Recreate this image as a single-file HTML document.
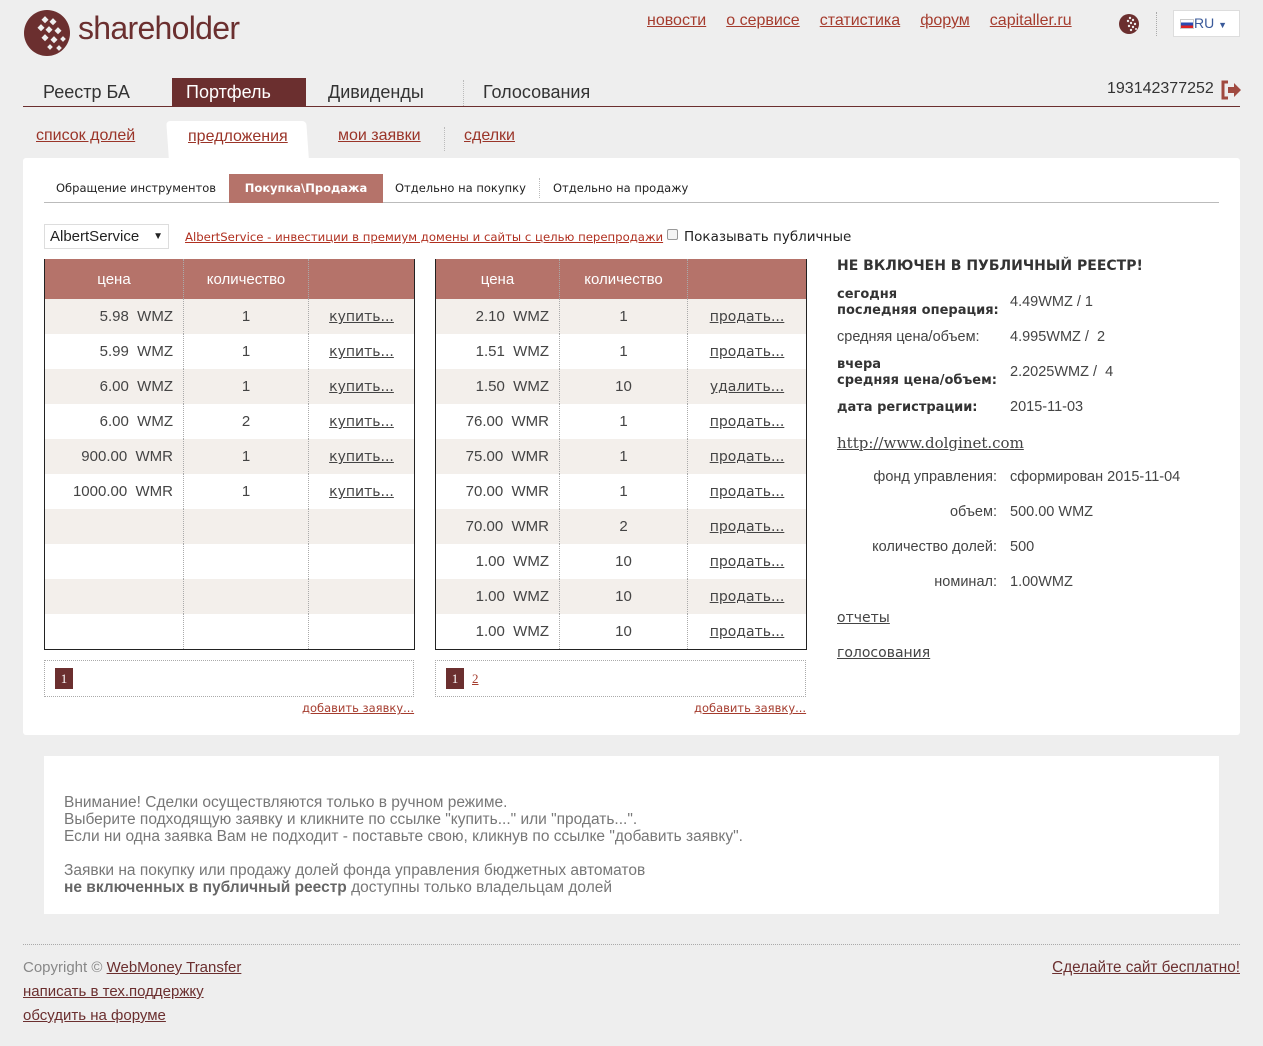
<!DOCTYPE html>
<html><head><meta charset="utf-8"><style>
*{margin:0;padding:0;box-sizing:border-box}
body{width:1263px;height:1046px;background:#eeeeee;font-family:"Liberation Sans",sans-serif;color:#333;position:relative;overflow:hidden}
a{color:#8b2d22;text-decoration:underline}
.abs{position:absolute}
.top a{font-size:16px;color:#a53c2e;margin-left:20px}
.tabs div{position:absolute;top:78px;height:28px;font-size:18px;line-height:28px;color:#333}
.sub a{position:absolute;font-size:16px;color:#9a3428}
table{border-collapse:collapse;position:absolute;font-size:15px;color:#444}
table td,table th{height:35px;border-right:1px dotted #aaa}
table th{height:40px;background:#b5736a;color:#fff;font-weight:normal;font-size:15px}
table td:last-child,table th:last-child{border-right:none}
tr.o td{background:#f3efeb}
td.p{text-align:right;padding-right:10px}
td.q{text-align:center}
td.l{text-align:center}
td.l a{color:#444;font-family:"DejaVu Sans",sans-serif;font-size:14px}
.info{position:absolute;left:837px;font-size:14.5px;color:#444}
</style></head><body>
<svg class="abs" style="left:23px;top:9px" width="50" height="50" viewBox="0 0 50 50">
<circle cx="24" cy="24" r="23" fill="#6b2f2f"/>
<g fill="#eee">
<rect x="20" y="8" width="5" height="5" transform="rotate(45 22 10)"/>
<rect x="28" y="10" width="5" height="5" transform="rotate(45 30 12)"/>
<rect x="16" y="16" width="5" height="5" transform="rotate(45 18 18)"/>
<rect x="24" y="18" width="5" height="5" transform="rotate(45 26 20)"/>
<rect x="33" y="19" width="5" height="5" transform="rotate(45 35 21)"/>
<rect x="20" y="26" width="5" height="5" transform="rotate(45 22 28)"/>
<rect x="29" y="28" width="5" height="5" transform="rotate(45 31 30)"/>
<rect x="38" y="28" width="4" height="4" transform="rotate(45 40 30)"/>
<rect x="25" y="36" width="4" height="4" transform="rotate(45 27 38)"/>
<rect x="34" y="37" width="4" height="4" transform="rotate(45 36 39)"/>
</g></svg>
<div class="abs" style="left:78px;top:10px;font-size:32px;color:#6b2f2f;letter-spacing:-0.7px">shareholder</div>
<div class="abs top" style="left:627px;top:12px"><a>новости</a><a>о сервисе</a><a>статистика</a><a>форум</a><a>capitaller.ru</a></div>
<svg class="abs" style="left:1119px;top:13px" width="22" height="22" viewBox="0 0 22 22"><circle cx="10" cy="11" r="10" fill="#6b2f2f"/><g fill="#eee"><circle cx="11" cy="5" r="1.2"/><circle cx="14" cy="7" r="1.2"/><circle cx="9" cy="8" r="1.2"/><circle cx="12" cy="10" r="1.2"/><circle cx="16" cy="11" r="1.2"/><circle cx="10" cy="13" r="1.2"/><circle cx="14" cy="14" r="1.2"/><circle cx="12" cy="17" r="1.2"/><circle cx="17" cy="16" r="1"/></g></svg>
<div class="abs" style="left:1156px;top:12px;height:24px;border-left:1px dotted #aaa"></div>
<div class="abs" style="left:1173px;top:10px;width:67px;height:27px;background:#fff;border:1px solid #ddd;font-size:14px;color:#3a5a9a;line-height:25px;padding-left:6px"><span style="display:inline-block;width:14px;height:10px;background:linear-gradient(#fff 33%,#2a4bb0 33%,#2a4bb0 66%,#d22 66%);vertical-align:-1px;border:1px solid #ccc"></span>RU <span style="font-size:9px">▼</span></div>

<div class="tabs">
<div style="left:43px">Реестр БА</div>
<div style="left:172px;width:134px;background:#6b2f2f;color:#fff;padding-left:14px">Портфель</div>
<div style="left:328px">Дивиденды</div>
<div style="left:463px;height:26px;border-left:1px dotted #bbb;top:80px"></div>
<div style="left:483px">Голосования</div>
</div>
<div class="abs" style="left:1107px;top:80px;font-size:16px;color:#333">193142377252</div>
<svg class="abs" style="left:1220px;top:80px" width="22" height="20" viewBox="0 0 22 20"><path d="M8 2H3v16h5" stroke="#a04a40" stroke-width="3" fill="none"/><path d="M8 7h6V3l7 7-7 7v-4H8z" fill="#a04a40"/></svg>
<div class="abs" style="left:23px;top:106px;width:1217px;height:1px;background:#6b2f2f"></div>

<div class="abs" style="left:23px;top:158px;width:1217px;height:577px;background:#fff;border-radius:3px"></div>
<div class="abs" style="left:169px;top:121px;width:140px;height:40px;background:#fff;border-radius:4px 4px 0 0;transform:skewX(4deg);transform-origin:bottom left"></div>
<div class="sub">
<a style="left:36px;top:127px">список долей</a>
<a style="left:188px;top:128px">предложения</a>
<a style="left:338px;top:127px">мои заявки</a>
<div class="abs" style="left:444px;top:127px;height:24px;border-left:1px dotted #bbb"></div>
<a style="left:464px;top:127px">сделки</a>
</div>

<div class="abs" style="left:44px;top:174px;height:29px;font-family:'DejaVu Sans',sans-serif;color:#222;line-height:29px;width:1175px;border-bottom:1px solid #bbb">
<span class="abs" style="left:12px;font-size:11.5px">Обращение инструментов</span>
<span class="abs" style="left:185px;width:154px;background:#b5736a;color:#fff;font-weight:bold;text-align:center;font-size:11.5px">Покупка\Продажа</span>
<span class="abs" style="left:351px;font-size:11.5px">Отдельно на покупку</span>
<span class="abs" style="left:495px;top:4px;height:20px;border-left:1px dotted #bbb"></span>
<span class="abs" style="left:509px;font-size:11.5px">Отдельно на продажу</span>
</div>

<div class="abs" style="left:44px;top:224px;width:125px;height:25px;background:#fff;border:1px solid #ddd;font-size:15px;line-height:23px;padding-left:5px;color:#222">AlbertService <span style="font-size:10px;position:absolute;right:5px">▼</span></div>
<a class="abs" style="left:185px;top:230px;font-size:11.7px;font-family:'DejaVu Sans',sans-serif;color:#b03020">AlbertService - инвестиции в премиум домены и сайты с целью перепродажи</a>
<div class="abs" style="left:667px;top:229px;width:11px;height:11px;border:1px solid #999;border-radius:2px;background:#f4f4f4"></div>
<div class="abs" style="left:684px;top:229px;font-size:13.5px;font-family:'DejaVu Sans',sans-serif;color:#222">Показывать публичные</div>

<table style="left:44px;top:259px;width:371px;border:1px solid #222;border-top:none">
<tr><th style="width:139px">цена</th><th style="width:125px">количество</th><th></th></tr>
<tr class="o"><td class="p">5.98&nbsp; WMZ</td><td class="q">1</td><td class="l"><a>купить...</a></td></tr>
<tr><td class="p">5.99&nbsp; WMZ</td><td class="q">1</td><td class="l"><a>купить...</a></td></tr>
<tr class="o"><td class="p">6.00&nbsp; WMZ</td><td class="q">1</td><td class="l"><a>купить...</a></td></tr>
<tr><td class="p">6.00&nbsp; WMZ</td><td class="q">2</td><td class="l"><a>купить...</a></td></tr>
<tr class="o"><td class="p">900.00&nbsp; WMR</td><td class="q">1</td><td class="l"><a>купить...</a></td></tr>
<tr><td class="p">1000.00&nbsp; WMR</td><td class="q">1</td><td class="l"><a>купить...</a></td></tr>
<tr class="o"><td></td><td></td><td></td></tr>
<tr><td></td><td></td><td></td></tr>
<tr class="o"><td></td><td></td><td></td></tr>
<tr><td></td><td></td><td></td></tr>
</table>
<table style="left:435px;top:259px;width:372px;border:1px solid #222;border-top:none">
<tr><th style="width:124px">цена</th><th style="width:128px">количество</th><th></th></tr>
<tr class="o"><td class="p">2.10&nbsp; WMZ</td><td class="q">1</td><td class="l"><a>продать...</a></td></tr>
<tr><td class="p">1.51&nbsp; WMZ</td><td class="q">1</td><td class="l"><a>продать...</a></td></tr>
<tr class="o"><td class="p">1.50&nbsp; WMZ</td><td class="q">10</td><td class="l"><a>удалить...</a></td></tr>
<tr><td class="p">76.00&nbsp; WMR</td><td class="q">1</td><td class="l"><a>продать...</a></td></tr>
<tr class="o"><td class="p">75.00&nbsp; WMR</td><td class="q">1</td><td class="l"><a>продать...</a></td></tr>
<tr><td class="p">70.00&nbsp; WMR</td><td class="q">1</td><td class="l"><a>продать...</a></td></tr>
<tr class="o"><td class="p">70.00&nbsp; WMR</td><td class="q">2</td><td class="l"><a>продать...</a></td></tr>
<tr><td class="p">1.00&nbsp; WMZ</td><td class="q">10</td><td class="l"><a>продать...</a></td></tr>
<tr class="o"><td class="p">1.00&nbsp; WMZ</td><td class="q">10</td><td class="l"><a>продать...</a></td></tr>
<tr><td class="p">1.00&nbsp; WMZ</td><td class="q">10</td><td class="l"><a>продать...</a></td></tr>
</table>

<div class="abs" style="left:44px;top:660px;width:370px;height:37px;border:1px dotted #aaa"></div>
<div class="abs" style="left:55px;top:668px;width:18px;height:21px;background:#6b2f2f;color:#fff;font-family:'Liberation Serif',serif;font-size:13px;text-align:center;line-height:21px">1</div>
<a class="abs" style="left:302px;top:701px;font-size:11.5px;font-family:'DejaVu Sans',sans-serif;color:#a53c2e">добавить заявку...</a>
<div class="abs" style="left:435px;top:660px;width:371px;height:37px;border:1px dotted #aaa"></div>
<div class="abs" style="left:446px;top:668px;width:18px;height:21px;background:#6b2f2f;color:#fff;font-family:'Liberation Serif',serif;font-size:13px;text-align:center;line-height:21px">1</div>
<a class="abs" style="left:472px;top:671px;font-family:'Liberation Serif',serif;font-size:13px;color:#a53c2e">2</a>
<a class="abs" style="left:694px;top:701px;font-size:11.5px;font-family:'DejaVu Sans',sans-serif;color:#a53c2e">добавить заявку...</a>

<div class="info" style="top:258px;font-family:'DejaVu Sans',sans-serif;font-weight:bold;font-size:14px;color:#333">НЕ ВКЛЮЧЕН В ПУБЛИЧНЫЙ РЕЕСТР!</div>
<div class="info" style="top:287px;font-family:'DejaVu Sans',sans-serif;font-weight:bold;font-size:13px;line-height:16px;color:#333">сегодня<br>последняя операция:</div>
<div class="info" style="left:1010px;top:294px">4.49WMZ / 1</div>
<div class="info" style="top:329px">средняя цена/объем:</div>
<div class="info" style="left:1010px;top:329px">4.995WMZ /&nbsp; 2</div>
<div class="info" style="top:357px;font-family:'DejaVu Sans',sans-serif;font-weight:bold;font-size:13px;line-height:16px;color:#333">вчера<br>средняя цена/объем:</div>
<div class="info" style="left:1010px;top:364px">2.2025WMZ /&nbsp; 4</div>
<div class="info" style="top:400px;font-family:'DejaVu Sans',sans-serif;font-weight:bold;font-size:13px;color:#333">дата регистрации:</div>
<div class="info" style="left:1010px;top:399px">2015-11-03</div>
<a class="info" style="top:434px;font-family:'DejaVu Serif','Liberation Serif',serif;font-size:15px;color:#444">http://www.dolginet.com</a>
<div class="info" style="left:797px;width:200px;text-align:right;top:469px">фонд управления:</div><div class="info" style="left:1010px;top:469px">сформирован 2015-11-04</div>
<div class="info" style="left:797px;width:200px;text-align:right;top:504px">объем:</div><div class="info" style="left:1010px;top:504px">500.00 WMZ</div>
<div class="info" style="left:797px;width:200px;text-align:right;top:539px">количество долей:</div><div class="info" style="left:1010px;top:539px">500</div>
<div class="info" style="left:797px;width:200px;text-align:right;top:574px">номинал:</div><div class="info" style="left:1010px;top:574px">1.00WMZ</div>
<a class="info" style="top:610px;font-family:'DejaVu Sans',sans-serif;color:#444;font-size:14px">отчеты</a>
<a class="info" style="top:645px;font-family:'DejaVu Sans',sans-serif;color:#444;font-size:14px">голосования</a>

<div class="abs" style="left:44px;top:756px;width:1175px;height:158px;background:#fff"></div>
<div class="abs" style="left:64px;top:794px;font-size:15.5px;line-height:17px;color:#777">Внимание! Сделки осуществляются только в ручном режиме.<br>Выберите подходящую заявку и кликните по ссылке "купить..." или "продать...".<br>Если ни одна заявка Вам не подходит - поставьте свою, кликнув по ссылке "добавить заявку".<br><br>Заявки на покупку или продажу долей фонда управления бюджетных автоматов<br><b style="color:#666">не включенных в публичный реестр</b> доступны только владельцам долей</div>

<div class="abs" style="left:23px;top:944px;width:1217px;border-top:1px dotted #aaa"></div>
<div class="abs" style="left:23px;top:959px;font-size:15px;color:#888">Copyright © <a style="color:#6b2f2f">WebMoney Transfer </a></div>
<a class="abs" style="left:23px;top:983px;font-size:15px;color:#6b2f2f">написать в тех.поддержку</a>
<a class="abs" style="left:23px;top:1007px;font-size:15px;color:#6b2f2f">обсудить на форуме</a>
<a class="abs" style="right:23px;top:959px;font-size:15.3px;color:#6b2f2f">Сделайте сайт бесплатно!</a>
</body></html>
